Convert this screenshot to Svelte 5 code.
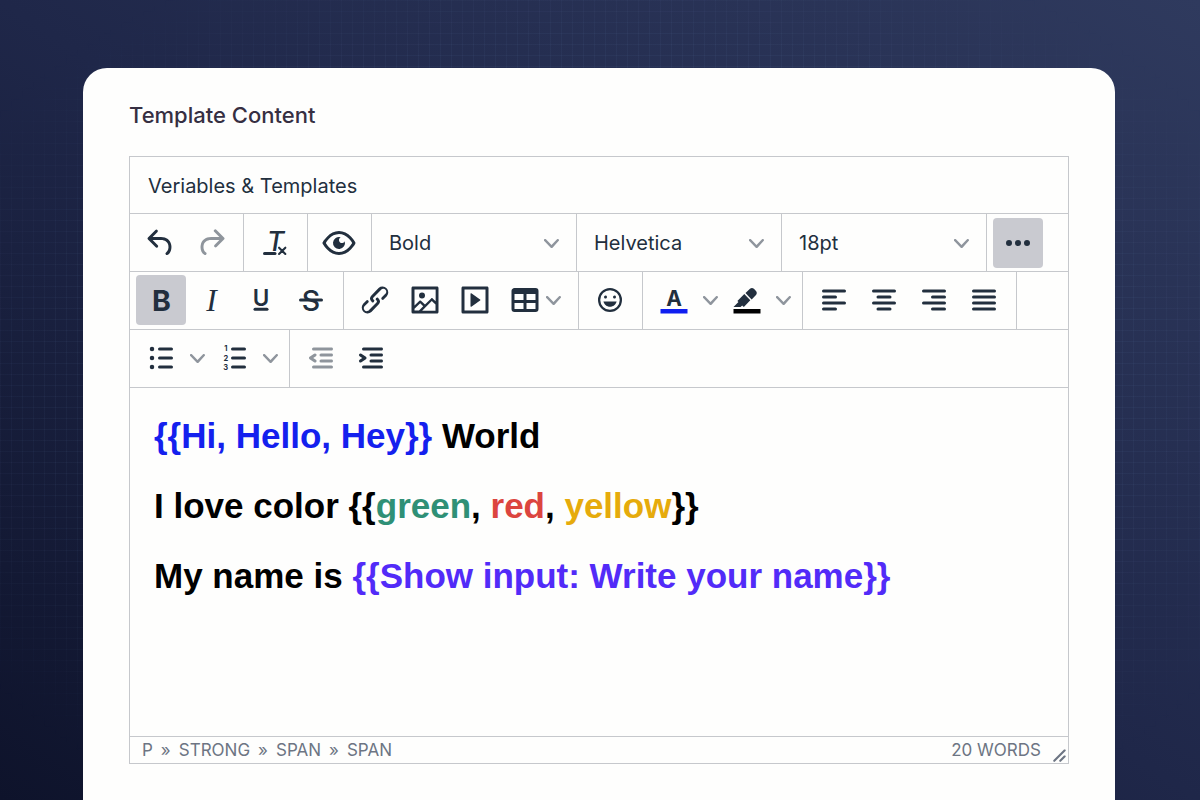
<script lang="ts">
  type Tone = "blue" | "green" | "red" | "yellow" | "purple";
  interface Run {
    text: string;
    tone?: Tone;
  }
  interface Item {
    icon: string;
    label: string;
    kind?: "split" | "menu";
    active?: boolean;
    disabled?: boolean;
  }

  const icons: Record<string, string> = {
    undo: "M6.4 8H12c3.7 0 6.2 2 6.8 5.1.6 2.7-.4 5.6-2.3 6.8a1 1 0 01-1-1.8c1.1-.6 1.8-2.7 1.4-4.6-.5-2.1-2.1-3.5-4.9-3.5H6.4l3.3 3.3a1 1 0 11-1.4 1.4l-5-5a1 1 0 010-1.4l5-5a1 1 0 011.4 1.4L6.4 8z",
    redo: "M17.6 10H12c-2.8 0-4.4 1.4-4.9 3.5-.4 2 .3 4 1.4 4.6a1 1 0 11-1 1.8c-2-1.2-2.9-4.1-2.3-6.8.6-3 3-5.1 6.8-5.1h5.6l-3.3-3.3a1 1 0 111.4-1.4l5 5a1 1 0 010 1.4l-5 5a1 1 0 01-1.4-1.4l3.3-3.3z",
    preview: "M3.5 12.5c.5.8 1.1 1.6 1.8 2.3 2 2 4.2 3.2 6.7 3.2s4.7-1.2 6.7-3.2a16.2 16.2 0 002.1-2.8 15.7 15.7 0 00-2.1-2.8c-2-2-4.2-3.2-6.7-3.2a9.3 9.3 0 00-6.7 3.2A16.2 16.2 0 003.2 12c0 .2.2.3.3.5zm-2.4-1l.7-1.2L4 7.8C6.2 5.4 8.9 4 12 4c3 0 5.8 1.4 8.1 3.8a18.2 18.2 0 012.8 3.7v1l-.7 1.2-2.1 2.5c-2.3 2.4-5 3.8-8.1 3.8-3 0-5.8-1.4-8.1-3.8a18.2 18.2 0 01-2.8-3.7 1 1 0 010-1zm12-3.3a2 2 0 102.7 2.6 4 4 0 11-2.6-2.6z",
    more: "M6 10a2 2 0 100 4 2 2 0 000-4zm12 0a2 2 0 100 4 2 2 0 000-4zm-6 0a2 2 0 100 4 2 2 0 000-4z",
    link: "M6.2 12.3a1 1 0 011.4 1.4l-2.1 2a2 2 0 102.7 2.8l4.8-4.8a1 1 0 000-1.4 1 1 0 111.4-1.3 2.9 2.9 0 010 4L9.6 20a3.9 3.9 0 01-5.5-5.5l2-2zm11.6-.6a1 1 0 01-1.4-1.4l2-2a2 2 0 10-2.6-2.8L11 10.3a1 1 0 000 1.4A1 1 0 119.6 13a2.9 2.9 0 010-4L14.4 4a3.9 3.9 0 015.5 5.5l-2 2z",
    image: "M5 15.7l3.3-3.2c.3-.3.7-.3 1 0L12 15l4.1-4c.3-.4.8-.4 1 0l2 1.9V5H5v10.7zM5 18V19h3l2.8-2.9-2-2L5 17.9zm14-3l-2.5-2.4-6.4 6.5H19v-4zM4 3h16c.6 0 1 .4 1 1v16c0 .6-.4 1-1 1H4a1 1 0 01-1-1V4c0-.6.4-1 1-1zm6 8a2 2 0 100-4 2 2 0 000 4z",
    media: "M4 3h16c.6 0 1 .4 1 1v16c0 .6-.4 1-1 1H4a1 1 0 01-1-1V4c0-.6.4-1 1-1zm1 2v14h14V5H5zm4.8 2.6l5.6 4a.5.5 0 010 .8l-5.6 4A.5.5 0 019 16V8a.5.5 0 01.8-.4z",
    table: "M19 4a2 2 0 012 2v12a2 2 0 01-2 2H5a2 2 0 01-2-2V6c0-1.1.9-2 2-2h14zM5 14v4h6v-4H5zm14 0h-6v4h6v-4zm0-6h-6v4h6V8zM5 12h6V8H5v4z",
    emoji: "M9 11c.6 0 1-.4 1-1s-.4-1-1-1a1 1 0 00-1 1c0 .6.4 1 1 1zm6 0c.6 0 1-.4 1-1s-.4-1-1-1a1 1 0 00-1 1c0 .6.4 1 1 1zm-3 5.5c2.1 0 4-1.5 4.4-3.5H7.6c.5 2 2.3 3.5 4.4 3.5zM12 4a8 8 0 100 16 8 8 0 000-16zm0 14.5a6.5 6.5 0 110-13 6.5 6.5 0 010 13z",
    highlight: "M7.7 16.7H3l3.3-3.3-.7-.8L10.2 8l4 4.1-4 4.2c-.2.2-.6.2-.8 0l-.6-.7-1.1 1.1zm5-7.5L11 7.4l3-2.9a2 2 0 012.6 0L18 6c.7.7.7 2 0 2.7l-2.9 2.9-1.8-1.8-.6-.6z",
    outdent: "M7 5h12c.6 0 1 .4 1 1s-.4 1-1 1H7a1 1 0 110-2zm5 4h7c.6 0 1 .4 1 1s-.4 1-1 1h-7a1 1 0 010-2zm0 4h7c.6 0 1 .4 1 1s-.4 1-1 1h-7a1 1 0 010-2zm-5 4h12a1 1 0 010 2H7a1 1 0 010-2zm1.6-3.8a1 1 0 01-1.2 1.6l-3-2a1 1 0 010-1.6l3-2a1 1 0 011.2 1.6L6.8 12l1.8 1.2z",
    indent: "M7 5h12c.6 0 1 .4 1 1s-.4 1-1 1H7a1 1 0 110-2zm5 4h7c.6 0 1 .4 1 1s-.4 1-1 1h-7a1 1 0 010-2zm0 4h7c.6 0 1 .4 1 1s-.4 1-1 1h-7a1 1 0 010-2zm-5 4h12a1 1 0 010 2H7a1 1 0 010-2zm-2.6-3.8L6.2 12l-1.8-1.2a1 1 0 011.2-1.6l3 2a1 1 0 010 1.6l-3 2a1 1 0 11-1.2-1.6z",
  };

  // icons made only of rounded rules
  const rules: Record<string, string> = {
    left: "M5 6h14M5 10h8M5 14h14M5 18h8",
    center: "M5 6h14M8 10h8M5 14h14M8 18h8",
    right: "M5 6h14M11 10h8M5 14h14M11 18h8",
    justify: "M5 6h14M5 10h14M5 14h14M5 18h14",
    bullets: "M11 6h8M11 12h8M11 18h8",
    numbers: "M11 6h8M11 12h8M11 18h8",
    underline: "M8 18.2h8",
    strike: "M5 12h14",
    clear: "M5 19h7",
  };

  const history: Item[] = [
    { icon: "undo", label: "Undo" },
    { icon: "redo", label: "Redo", disabled: true },
  ];
  const selects = [
    { label: "Formats", value: "Bold", options: ["Bold", "Italic", "Underline"] },
    { label: "Fonts", value: "Helvetica", options: ["Arial", "Georgia", "Helvetica"] },
    { label: "Font sizes", value: "18pt", options: ["12pt", "14pt", "18pt", "24pt"] },
  ];
  const secondRow: Item[][] = [
    [
      { icon: "bold", label: "Bold", active: true },
      { icon: "italic", label: "Italic" },
      { icon: "underline", label: "Underline" },
      { icon: "strike", label: "Strikethrough" },
    ],
    [
      { icon: "link", label: "Insert link" },
      { icon: "image", label: "Insert image" },
      { icon: "media", label: "Insert media" },
      { icon: "table", label: "Table", kind: "menu" },
    ],
    [{ icon: "emoji", label: "Emoticons" }],
    [
      { icon: "color", label: "Text color", kind: "split" },
      { icon: "highlight", label: "Background color", kind: "split" },
    ],
    [
      { icon: "left", label: "Align left" },
      { icon: "center", label: "Align center" },
      { icon: "right", label: "Align right" },
      { icon: "justify", label: "Justify" },
    ],
  ];
  const thirdRow: Item[][] = [
    [
      { icon: "bullets", label: "Bullet list", kind: "split" },
      { icon: "numbers", label: "Numbered list", kind: "split" },
    ],
    [
      { icon: "outdent", label: "Decrease indent", disabled: true },
      { icon: "indent", label: "Increase indent" },
    ],
  ];

  const paragraphs: Run[][] = [
    [{ text: "{{Hi, Hello, Hey}}", tone: "blue" }, { text: " World" }],
    [
      { text: "I love color {{" },
      { text: "green", tone: "green" },
      { text: ", " },
      { text: "red", tone: "red" },
      { text: ", " },
      { text: "yellow", tone: "yellow" },
      { text: "}}" },
    ],
    [{ text: "My name is " }, { text: "{{Show input: Write your name}}", tone: "purple" }],
  ];
  const path = ["P", "STRONG", "SPAN", "SPAN"];

  let expanded = $state(true);
</script>

{#snippet glyph(name: string)}
  <svg class="icon" viewBox="0 0 24 24" aria-hidden="true">
    {#if icons[name]}
      <path d={icons[name]} fill-rule="evenodd" />
    {/if}
    {#if rules[name]}
      <path class="rule" d={rules[name]} />
    {/if}
    {#if name === "bold"}
      <text class="sans heavy" x="12.3" y="19" font-size="19">B</text>
    {:else if name === "italic"}
      <text class="serif" x="12.3" y="19" font-size="21">I</text>
    {:else if name === "underline"}
      <text class="sans medium" x="12" y="15.8" font-size="15">U</text>
    {:else if name === "strike"}
      <text class="sans" x="12" y="19" font-size="19">S</text>
    {:else if name === "clear"}
      <text class="sans slanted" x="12.4" y="17" font-size="18">T</text>
      <path class="cross" d="M14.7 15.1l4.2 4.2m0-4.2l-4.2 4.2" />
    {:else if name === "color"}
      <text class="sans heavy" x="12" y="16" font-size="14">A</text>
      <path class="swatch-text" d="M3 18h18v3H3z" />
    {:else if name === "highlight"}
      <path class="swatch-back" d="M3 18h18v3H3z" />
    {:else if name === "bullets"}
      <circle cx="6" cy="6" r="1.5" />
      <circle cx="6" cy="12" r="1.5" />
      <circle cx="6" cy="18" r="1.5" />
    {:else if name === "numbers"}
      <text class="sans heavy" x="6.5" y="7.6" font-size="5">1</text>
      <text class="sans heavy" x="6.5" y="13.7" font-size="5">2</text>
      <text class="sans heavy" x="6.5" y="19.8" font-size="5">3</text>
    {/if}
  </svg>
{/snippet}

{#snippet chevron()}
  <svg class="chevron" viewBox="0 0 10 10" aria-hidden="true">
    <path d="M8.7 2.2c.3-.3.8-.3 1 0 .4.4.4.9 0 1.2L5.7 7.8c-.3.3-.9.3-1.2 0L.2 3.4a.8.8 0 010-1.2c.3-.3.8-.3 1.1 0L5 6l3.7-3.8z" />
  </svg>
{/snippet}

{#snippet group(items: Item[])}
  <div class="group" role="group">
    {#each items as item (item.icon)}
      {#if item.kind === "menu"}
        <button class="tool menu" aria-label={item.label} aria-haspopup="true">
          {@render glyph(item.icon)}
          {@render chevron()}
        </button>
      {:else}
        <button class="tool" class:active={item.active} disabled={item.disabled} aria-label={item.label}>
          {@render glyph(item.icon)}
        </button>
        {#if item.kind === "split"}
          <button class="tool drop" aria-label="{item.label} options">{@render chevron()}</button>
        {/if}
      {/if}
    {/each}
  </div>
{/snippet}

<div class="page">
  <main class="card">
    <h1>Template Content</h1>

    <div class="editor">
      <div class="menubar" role="menubar">
        <button class="menuitem" role="menuitem">Veriables &amp; Templates</button>
      </div>

      <div class="toolbar main" role="toolbar" aria-label="Main">
        {@render group(history)}
        {@render group([{ icon: "clear", label: "Clear formatting" }])}
        {@render group([{ icon: "preview", label: "Preview" }])}
        {#each selects as s (s.label)}
          <div class="group">
            <label class="select">
              <select aria-label={s.label} value={s.value}>
                {#each s.options as option}
                  <option>{option}</option>
                {/each}
              </select>
              {@render chevron()}
            </label>
          </div>
        {/each}
        <div class="group last">
          <button
            class="tool"
            class:active={expanded}
            aria-label="More"
            aria-expanded={expanded}
            onclick={() => (expanded = !expanded)}
          >
            {@render glyph("more")}
          </button>
        </div>
      </div>

      {#if expanded}
        <div class="toolbar" role="toolbar" aria-label="Formatting">
          {#each secondRow as items}
            {@render group(items)}
          {/each}
        </div>
        <div class="toolbar open" role="toolbar" aria-label="Lists">
          {#each thirdRow as items}
            {@render group(items)}
          {/each}
        </div>
      {/if}

      <div class="content" contenteditable="true" spellcheck="false" role="textbox" aria-label="Template content" tabindex="0">
        {#each paragraphs as runs}
          <p><strong>{#each runs as run}<span class={run.tone}>{run.text}</span>{/each}</strong></p>
        {/each}
      </div>

      <div class="status">
        <nav class="path" aria-label="Element path">
          {#each path as element, i}
            {#if i > 0}<span aria-hidden="true">»</span>{/if}
            <button>{element}</button>
          {/each}
        </nav>
        <button class="count">20 WORDS</button>
        <svg class="resize" viewBox="0 0 10 10" aria-hidden="true">
          <path d="M8.1 1.1A.5.5 0 119 2l-7 7A.5.5 0 111 8l7-7zM8.1 5.1A.5.5 0 119 6l-3 3A.5.5 0 115 8l3-3z" />
        </svg>
      </div>
    </div>
  </main>
</div>

<style>
  :global(body) {
    margin: 0;
  }
  .page {
    --ink: #222f3e;
    --line: #c6c8cc;
    --muted: #6d7583;
    position: relative;
    box-sizing: border-box;
    min-height: 100vh;
    display: flex;
    flex-direction: column;
    padding: 68px 85px 0 83px;
    background: linear-gradient(to top right, #0e132b, #1f2749 50%, #2f3a5e);
    font-family: Inter, "Liberation Sans", sans-serif;
    color: var(--ink);
  }
  .page::before {
    content: "";
    position: absolute;
    inset: 0;
    background:
      repeating-linear-gradient(to right, rgba(120, 150, 200, 0.06) 0 1px, transparent 1px 11px),
      repeating-linear-gradient(to bottom, rgba(120, 150, 200, 0.06) 0 1px, transparent 1px 11px);
    mask-image: radial-gradient(ellipse, #000 65%, transparent 88%);
  }
  .card {
    position: relative;
    flex: 1;
    padding: 32px 46px 36px;
    border-radius: 24px 24px 0 0;
    background: #fefefd;
  }
  h1 {
    margin: 0 0 26px;
    font-size: 22px;
    line-height: 30px;
    font-weight: 500;
    color: #362f42;
  }
  button,
  select {
    font: inherit;
    color: inherit;
    background: none;
    border: 0;
    margin: 0;
    padding: 0;
  }
  .editor {
    border: 1px solid var(--line);
    font-size: 20px;
  }
  .menubar {
    display: flex;
    padding: 4px 6px 2px;
    border-bottom: 1px solid var(--line);
  }
  .menuitem {
    height: 50px;
    padding: 0 12px;
    border-radius: 4px;
  }
  .toolbar {
    display: flex;
    flex-wrap: wrap;
    border-bottom: 1px solid var(--line);
  }
  .group {
    display: flex;
    padding: 3px 7px 4px 6px;
    border-right: 1px solid var(--line);
  }
  .main .group {
    padding-top: 4px;
    padding-bottom: 3px;
  }
  .group.last,
  .open .group:last-child {
    border-right: 0;
  }
  .tool {
    display: flex;
    align-items: center;
    justify-content: center;
    width: 50px;
    height: 50px;
    border-radius: 4px;
  }
  .tool:hover:not(:disabled),
  .tool.active {
    background: #c9cad0;
  }
  .tool:disabled {
    opacity: 0.5;
  }
  .tool.menu {
    justify-content: flex-start;
    gap: 3px;
    width: 71px;
    padding-left: 7px;
  }
  .tool.drop {
    width: 23px;
  }
  .icon {
    width: 36px;
    height: 36px;
    fill: var(--ink);
  }
  .icon text {
    text-anchor: middle;
  }
  .icon .sans {
    font-family: Inter, sans-serif;
    font-weight: 500;
  }
  .icon .medium {
    font-weight: 600;
  }
  .icon .heavy {
    font-weight: 700;
  }
  .icon .slanted {
    font-style: italic;
  }
  .icon .serif {
    font-family: "Liberation Serif", serif;
    font-style: italic;
  }
  .icon .rule {
    fill: none;
    stroke: var(--ink);
    stroke-width: 2;
    stroke-linecap: round;
  }
  .icon .cross {
    fill: none;
    stroke: var(--ink);
    stroke-width: 1.4;
    stroke-linecap: round;
  }
  .icon .swatch-text {
    fill: #0f1ef0;
  }
  .icon .swatch-back {
    fill: #000;
  }
  .chevron {
    width: 15px;
    height: 15px;
    fill: #8f959d;
  }
  .select {
    display: grid;
    align-items: center;
    width: 191px;
    height: 50px;
  }
  .select select {
    grid-area: 1 / 1;
    height: 50px;
    padding: 0 32px 0 11px;
    appearance: none;
    border-radius: 4px;
  }
  .select .chevron {
    grid-area: 1 / 1;
    justify-self: end;
    margin-right: 10px;
    pointer-events: none;
  }
  .content {
    min-height: 302px;
    padding: 23px 24px;
    outline: none;
    font-family: Helvetica, "Liberation Sans", sans-serif;
    font-size: 35px;
    line-height: 50px;
    color: #000;
  }
  .content p {
    margin: 0 0 20px;
  }
  .blue { color: #1420ee; }
  .green { color: #2f9076; }
  .red { color: #dc453f; }
  .yellow { color: #e6ab0c; }
  .purple { color: #522bf8; }
  .status {
    display: flex;
    align-items: center;
    height: 26px;
    border-top: 1px solid var(--line);
    padding: 0 1px 0 12px;
    font-size: 17px;
    line-height: 26px;
    color: var(--muted);
  }
  .path {
    display: flex;
    gap: 8px;
    margin-right: auto;
  }
  .resize {
    align-self: flex-end;
    width: 15px;
    height: 15px;
    margin-left: 11px;
    fill: var(--muted);
  }
</style>
